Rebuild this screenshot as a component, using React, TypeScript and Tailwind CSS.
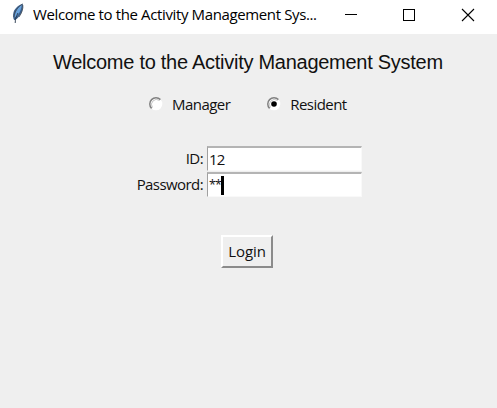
import React from "react";

const ui = "font-['Open_Sans','Noto_Sans',sans-serif] whitespace-nowrap";

function Feather() {
  return (
    <svg width="14" height="22" viewBox="0 0 14 22" className="ml-[11px] mt-[3px] shrink-0">
      <path d="M11.6 .8C8 2 4 5 2.6 9c-.9 3-.6 6 .6 8.2C7 16 10.500 11 11.600 6.500c.5-2 .6-4 0-5.700z" fill="#3a5f8c" />
      <path d="M10.800 2C7 4 4 8 3.600 14.500 7 13 10 8 10.800 2z" fill="#68a2dc" />
      <path d="M11.600 1C8 3 3.400 8 2.800 14M11.800 2c.6 3-.8 8-3.800 12" fill="none" stroke="#444c57" strokeWidth=".8" />
      <path d="M7 10C5.300 13 4.300 16 4.200 20" fill="none" stroke="#25364b" strokeWidth=".9" />
    </svg>
  );
}

function TitleBar() {
  return (
    <header className="flex h-[34px] bg-white">
      <Feather />
      <span className={`${ui} ml-2 w-[288px] text-[15px] leading-[29px] tracking-[-0.37px] text-black`}>
        Welcome to the Activity Management Sys...
      </span>
      <svg width="132" height="14" viewBox="0 0 132 14" className="ml-6 mt-2 shrink-0" fill="none" stroke="#000">
        <path d="M0 6.500h12M58.500 1.500h11v11h-11z" strokeWidth="1" shapeRendering="crispEdges" />
        <path d="M117 1l12 12M129 1l-12 12" strokeWidth="1.100" />
      </svg>
    </header>
  );
}

function Radio({ label, checked }: { label: string; checked?: boolean }) {
  return (
    <label className="flex h-5 items-center">
      <svg width="14" height="14" viewBox="0 0 14 14" className="shrink-0">
        <circle cx="7" cy="7" r="6.300" fill="#fff" />
        <path d="M2.600 11.400A6 6 0 0 1 11.400 2.600" fill="none" stroke="#808080" strokeWidth="1.500" />
        <path d="M3.500 10.500A5 5 0 0 1 10.500 3.500" fill="none" stroke="#b8b8b8" strokeWidth=".8" />
        {checked && <circle cx="7" cy="7" r="2.800" fill="#000" />}
      </svg>
      <span className={`${ui} ml-[9px] text-[15px] leading-5 tracking-[-0.55px]`}>{label}</span>
    </label>
  );
}

function Field({ label, value, masked }: { label: string; value: string; masked?: boolean }) {
  return (
    <div className="flex h-[26px]">
      <span className={`${ui} w-[203px] text-right text-[15px] leading-[24px] tracking-[-0.58px]`}>{label}</span>
      <div className="ml-[4px] flex h-[25px] w-[155px] items-center border border-b-[#f9f9f9] border-l-[#a0a0a0] border-r-[#f9f9f9] border-t-2 border-t-[#b4b4b4] bg-white pl-px">
        {masked ? (
          <>
            <span className={`${ui} text-[12.500px] leading-5 tracking-[-0.8px]`}>{value}</span>
            <span className="h-[19px] w-[2.500px] bg-black" />
          </>
        ) : (
          <span className={`${ui} pb-px text-[15px] leading-5 tracking-[-0.8px]`}>{value}</span>
        )}
      </div>
    </div>
  );
}

export default function App() {
  return (
    <main className="h-[408px] w-[497px] overflow-hidden bg-[#efefef] text-[#111]">
      <TitleBar />
      <h1 className="mt-[14px] pl-[53px] font-['Liberation_Sans',Arial,sans-serif] text-[20px] leading-7 tracking-[-0.270px] whitespace-nowrap">
        Welcome to the Activity Management System
      </h1>
      <div className="mt-[18px] flex gap-[37px] pl-[149px]">
        <Radio label="Manager" />
        <Radio label="Resident" checked />
      </div>
      <div className="mt-8">
        <Field label="ID:" value="12" />
        <Field label="Password:" value="**" masked />
      </div>
      <button className={`${ui} ml-[221px] mt-[37px] flex h-[33px] w-[52px] justify-center border-2 border-b-[#8b8b8b] border-l-white border-r-[#8b8b8b] border-t-white text-[15px] leading-7 tracking-[-0.1px]`}>
        Login
      </button>
    </main>
  );
}
